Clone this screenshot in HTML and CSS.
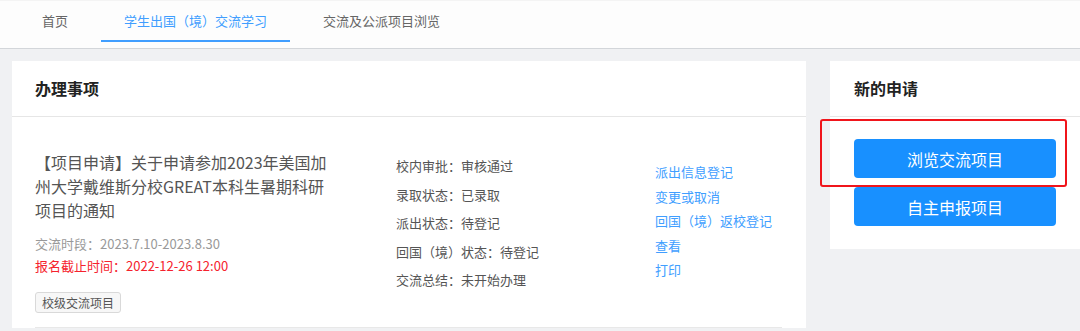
FILE: index.html
```html
<!DOCTYPE html>
<html lang="zh-CN">
<head>
  <meta charset="UTF-8">
  <title>学生出国（境）交流学习</title>
  <link rel="stylesheet" href="styles.css">
</head>
<body>

<!-- 顶部导航 -->
<div class="nav">
  <div class="nav-tab">首页</div>
  <div class="nav-tab active">学生出国（境）交流学习</div>
  <div class="nav-tab">交流及公派项目浏览</div>
</div>

<div class="main">
  <!-- 办理事项 -->
  <div class="card card-todo">
    <div class="card-head">办理事项</div>
    <div class="card-body">
      <div class="item">
        <div class="item-info">
          <div class="item-title">【项目申请】关于申请参加2023年美国加州大学戴维斯分校GREAT本科生暑期科研项目的通知</div>
          <div class="item-period">交流时段：2023.7.10-2023.8.30</div>
          <div class="item-deadline">报名截止时间：2022-12-26 12:00</div>
          <span class="tag">校级交流项目</span>
        </div>
        <div class="item-status">
          <div>校内审批：审核通过</div>
          <div>录取状态：已录取</div>
          <div>派出状态：待登记</div>
          <div>回国（境）状态：待登记</div>
          <div>交流总结：未开始办理</div>
        </div>
        <div class="item-links">
          <a>派出信息登记</a>
          <a>变更或取消</a>
          <a>回国（境）返校登记</a>
          <a>查看</a>
          <a>打印</a>
        </div>
      </div>
    </div>
  </div>

  <!-- 新的申请 -->
  <div class="card card-new">
    <div class="card-head">新的申请</div>
    <div class="card-body new-body">
      <button class="btn-primary">浏览交流项目</button>
      <button class="btn-primary">自主申报项目</button>
      <div class="highlight"></div>
    </div>
  </div>
</div>

</body>
</html>
```

FILE: styles.css
```css
body {
  margin: 0;
  background: #f0f1f3;
  font-family: "Noto Sans CJK SC", "Noto Sans", sans-serif;
  color: #555;
  overflow: hidden;
  text-spacing-trim: space-all;
}
.nav {
  height: 47px;
  background: #fdfdfd;
  border-top: 1px solid #f4f4f4;
  border-bottom: 1px solid #d3d6da;
  display: flex;
  padding-left: 19px;
  font-size: 13px;
}
.nav-tab {
  padding: 0 23px;
  margin-right: 10px;
  line-height: 39px;
  height: 39px;
  color: #666;
}
.nav-tab.active {
  color: #409eff;
  border-bottom: 2px solid #409eff;
}

.main {
  display: flex;
  gap: 24px;
  padding: 12px 0 0 12px;
}
.card {
  background: #fff;
}
.card-todo { width: 794px; flex: none; }
.card-new { width: 270px; flex: none; align-self: flex-start; }
.card-head {
  height: 55px;
  line-height: 55px;
  padding-left: 23px;
  font-size: 16px;
  font-weight: bold;
  color: #222;
  border-bottom: 1px solid #e6e6e6;
}
.card-new .card-head { padding-left: 24px; }

.card-body { padding: 33px 24px 0 23px; }
.item {
  display: flex;
  padding-bottom: 14px;
  border-bottom: 1px solid #e8e8e8;
}
.item-info { width: 300px; flex: none; margin-right: 61px; }
.item-title {
  font-size: 16px;
  line-height: 24px;
  color: #555;
}
.item-period, .item-deadline {
  font-size: 13px;
  line-height: 22px;
}
.item-period { color: #999; margin-top: 11px; }
.item-deadline { color: #f5222d; }
.tag {
  display: inline-block;
  margin-top: 15px;
  padding: 0 6px;
  height: 19px;
  line-height: 19px;
  font-size: 12px;
  color: #555;
  background: #f7f7f7;
  border: 1px solid #d9d9d9;
  border-radius: 3px;
}
.item-status {
  width: 259px;
  flex: none;
  margin-top: 2px;
  font-size: 13px;
  line-height: 28.6px;
  color: #555;
}
.item-links {
  display: flex;
  flex-direction: column;
  margin-top: 10px;
  font-size: 13px;
  line-height: 24.5px;
}
.item-links a { color: #409eff; cursor: pointer; }

.new-body {
  position: relative;
  padding: 22px 0 23px 24px;
  display: flex;
  flex-direction: column;
  gap: 9px;
}
.btn-primary {
  width: 202px;
  height: 39px;
  border: none;
  border-radius: 4px;
  background: #1890ff;
  color: #fff;
  font-family: inherit;
  font-size: 16px;
  cursor: pointer;
}
/* 红框标注 */
.highlight {
  position: absolute;
  left: -10px;
  top: 2px;
  width: 243px;
  height: 64px;
  border: 2px solid #f0151b;
  border-radius: 3px;
}
```
